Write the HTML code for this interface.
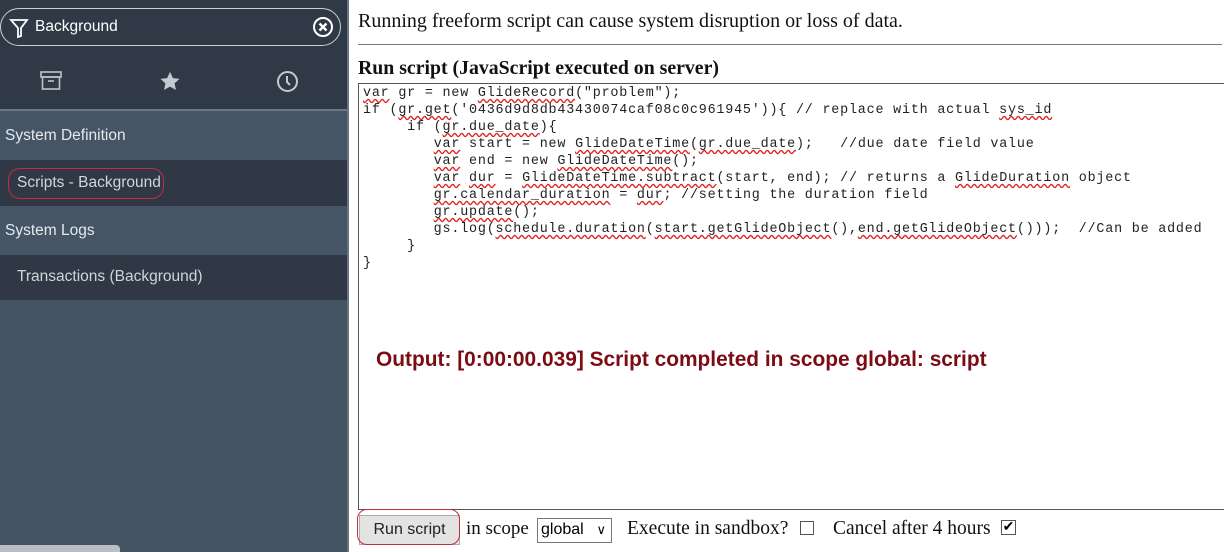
<!DOCTYPE html>
<html><head><meta charset="utf-8"><style>
*{margin:0;padding:0;box-sizing:border-box}
body{width:1231px;height:552px;overflow:hidden;background:#fff;position:relative;font-family:"Liberation Serif",serif}
#side{position:absolute;left:0;top:0;width:347px;height:552px;background:#455463;font-family:"Liberation Sans",sans-serif}
.top{position:absolute;left:0;top:0;width:347px;height:109px;background:#303a46}
.pill{position:absolute;left:0;top:8px;width:341px;height:38px;border:1px solid #c9ced4;border-radius:19px}
.pill span{position:absolute;left:34px;top:9px;color:#fff;font-size:15.5px}
.row{position:absolute;left:0;width:347px;color:#e6e9ec;font-size:15.5px}
.sec{background:#455565}
.it{background:#2f3844;color:#d0d5da}
.w{text-decoration:underline wavy #d22;text-decoration-skip-ink:none;text-underline-offset:2px}
#code{position:absolute;left:358px;top:83px;width:866px;height:427px;border:1px solid #555;border-right:none;overflow:hidden}
pre{font-family:"Liberation Mono",monospace;font-size:13.4px;line-height:17px;letter-spacing:0.8px;color:#222;padding:1px 0 0 4px}
</style></head><body>
<div id="side">
 <div class="top">
  <div class="pill">
   <svg style="position:absolute;left:8px;top:8px" width="20" height="22" viewBox="0 0 20 22"><path d="M2 3h16l-6 8v8l-3 1v-9z" fill="none" stroke="#fff" stroke-width="1.8"/></svg>
   <span>Background</span>
   <svg style="position:absolute;right:6px;top:7px" width="22" height="22" viewBox="0 0 22 22"><circle cx="11" cy="11" r="9" fill="none" stroke="#fff" stroke-width="2"/><path d="M7.5 7.5l7 7M14.5 7.5l-7 7" stroke="#fff" stroke-width="2.4"/></svg>
  </div>
  <svg style="position:absolute;left:40px;top:71px" width="22" height="19" viewBox="0 0 22 19"><rect x="1" y="1" width="20" height="5" fill="none" stroke="#bcc3ca" stroke-width="1.6"/><rect x="2.5" y="6" width="17" height="12" fill="none" stroke="#bcc3ca" stroke-width="1.6"/><path d="M8 10h6" stroke="#bcc3ca" stroke-width="1.6"/></svg>
  <svg style="position:absolute;left:159px;top:71px" width="22" height="20" viewBox="0 0 24 22"><path d="M12 1l3.2 6.8 7.3.8-5.5 5 1.6 7.3L12 17.2 5.4 20.9 7 13.6 1.5 8.6l7.3-.8z" fill="#c2c9d0"/></svg>
  <svg style="position:absolute;left:276px;top:70px" width="23" height="23" viewBox="0 0 23 23"><circle cx="11.5" cy="11.5" r="9.5" fill="none" stroke="#c2c9d0" stroke-width="2"/><path d="M11 6v6l3 3" fill="none" stroke="#c2c9d0" stroke-width="2"/></svg>
 </div>
 <div style="position:absolute;top:109px;left:0;width:347px;height:2px;background:#6c7782"></div>
 <div class="row sec" style="top:111px;height:49px;padding:16px 0 0 5px">System Definition</div>
 <div class="row it" style="top:160px;height:46px;padding:14px 0 0 17px">Scripts - Background
  <div style="position:absolute;left:8px;top:8px;width:156px;height:31px;border:1px solid #c0303a;border-radius:12px"></div></div>
 <div class="row sec" style="top:206px;height:49px;padding:16px 0 0 5px">System Logs</div>
 <div class="row it" style="top:255px;height:45px;padding:13px 0 0 17px">Transactions (Background)</div>
 <div style="position:absolute;left:0;top:545px;width:120px;height:7px;background:#b8bec4;border-radius:0 4px 0 0"></div>
</div>
<div style="position:absolute;left:347px;top:0;width:2px;height:552px;background:#6a737c"></div>
<div style="position:absolute;left:358px;top:10px;font-size:20px;color:#111">Running freeform script can cause system disruption or loss of data.</div>
<div style="position:absolute;left:358px;top:44px;width:864px;height:1px;background:#777"></div>
<div style="position:absolute;left:358px;top:57px;font-size:19.8px;font-weight:bold;color:#111">Run script (JavaScript executed on server)</div>
<div id="code"><pre><span class="w">var</span> gr = new <span class="w">GlideRecord</span>("problem");
if (<span class="w">gr.get</span>('0436d9d8db43430074caf08c0c961945')){ // replace with actual <span class="w">sys_id</span>
     if (<span class="w">gr.due_date</span>){
        <span class="w">var</span> start = new <span class="w">GlideDateTime</span>(<span class="w">gr.due_date</span>);   //due date field value
        <span class="w">var</span> end = new <span class="w">GlideDateTime</span>();
        <span class="w">var</span> <span class="w">dur</span> = <span class="w">GlideDateTime.subtract</span>(start, end); // returns a <span class="w">GlideDuration</span> object
        <span class="w">gr.calendar_duration</span> = <span class="w">dur</span>; //setting the duration field
        <span class="w">gr.update</span>();
        gs.log(<span class="w">schedule.duration</span>(<span class="w">start.getGlideObject</span>(),<span class="w">end.getGlideObject</span>()));  //Can be added
     }
}</pre>
<div style="position:absolute;left:17px;top:264px;font-family:'Liberation Sans',sans-serif;font-weight:bold;font-size:20.9px;color:#7b0c14">Output: [0:00:00.039] Script completed in scope global: script</div>
</div>
<div style="position:absolute;left:359px;top:515px;width:101px;height:30px;background:#e3e3e3;border:1px solid #aaa;font-family:'Liberation Sans',sans-serif;font-size:16px;color:#222;text-align:center;line-height:28px">Run script</div>
<div style="position:absolute;left:357px;top:509px;width:103px;height:36px;border:1px solid #c0303a;border-radius:10px"></div>
<div style="position:absolute;left:466px;top:518px;font-size:19px;color:#111">in scope</div>
<div style="position:absolute;left:537px;top:518px;width:75px;height:25px;border:1px solid #777;font-family:'Liberation Sans',sans-serif;font-size:16px;padding:2px 0 0 3px">global <span style="font-size:13px;position:absolute;right:5px;top:3px">&#8744;</span></div>
<div style="position:absolute;left:627px;top:518px;font-size:19.5px;color:#111">Execute in sandbox?</div>
<div style="position:absolute;left:800px;top:521px;width:14px;height:14px;border:1px solid #555"></div>
<div style="position:absolute;left:833px;top:518px;font-size:19.5px;color:#111">Cancel after 4 hours</div>
<div style="position:absolute;left:1001px;top:520px;width:15px;height:15px;border:1px solid #555;font-size:14px;line-height:13px;text-align:center">&#10004;</div>
</body></html>
